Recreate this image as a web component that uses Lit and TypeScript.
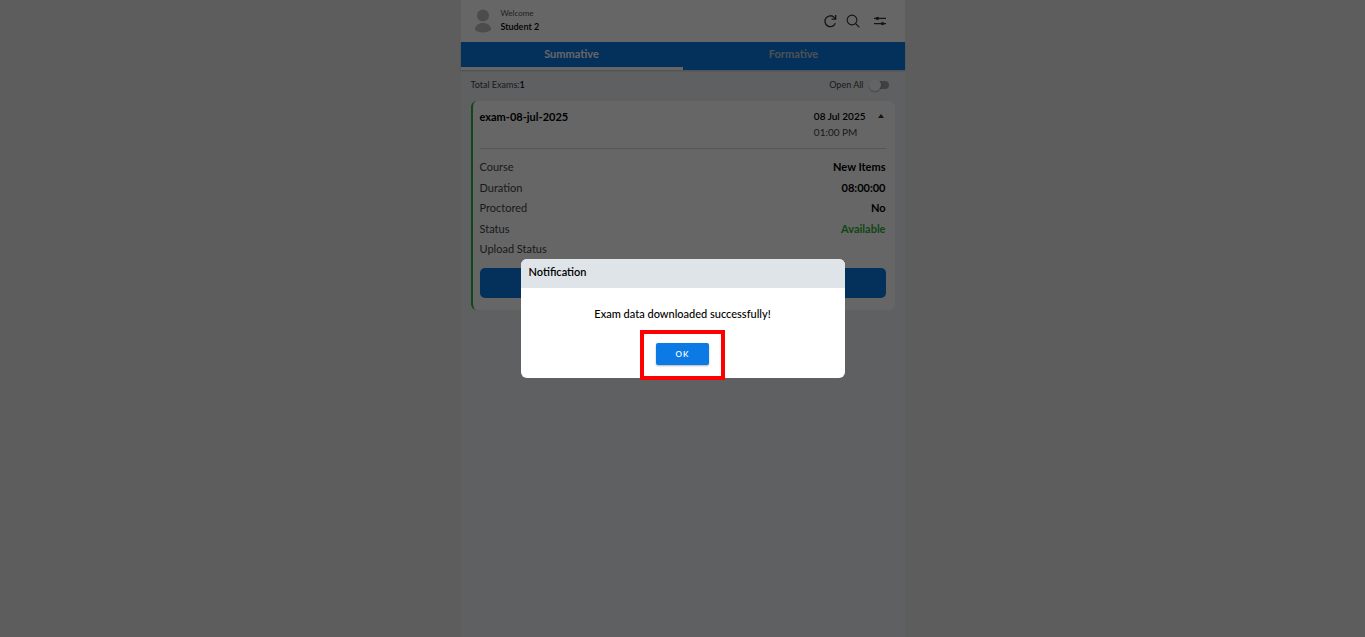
import { LitElement, html, css } from "lit";
import { customElement, state } from "lit/decorators.js";
import { classMap } from "lit/directives/class-map.js";

const details = [
  { label: "Course", value: "New Items", ok: false },
  { label: "Duration", value: "08:00:00", ok: false },
  { label: "Proctored", value: "No", ok: false },
  { label: "Status", value: "Available", ok: true },
  { label: "Upload Status", value: "", ok: false },
];

@customElement("app-root")
export class AppRoot extends LitElement {
  @state() private tab = 0;
  @state() private expanded = true;
  @state() private notice = true;

  static styles = css`
    :host {
      display: block;
      min-height: 100vh;
      background: #e9e9e9;
      color: #000;
      font-family: Lato, "Open Sans", sans-serif;
      font-size: 11px;
      line-height: 14px;
    }
    * {
      box-sizing: border-box;
    }
    button {
      margin: 0;
      padding: 0;
      border: 0;
      background: none;
      font: inherit;
      color: inherit;
      cursor: pointer;
    }
    svg {
      display: block;
    }
    .app {
      width: 100%;
      max-width: 444px;
      min-height: 100vh;
      margin: 0 auto;
      background: #edf1f5;
    }
    .header {
      display: flex;
      align-items: center;
      padding: 6px 18px 6px 13px;
      background: #fff;
    }
    .who {
      flex: 1;
      margin-left: 9px;
      padding-bottom: 2px;
      font-size: 9px;
    }
    .welcome {
      color: #555;
      font-size: 8px;
    }
    .name {
      font-weight: 600;
    }
    .tools {
      display: flex;
      gap: 9px;
      color: #333;
    }
    .tools button:last-child {
      margin-left: 4px;
    }
    .tabs {
      display: flex;
      background: #0b7ae5;
      box-shadow: 0 1px 2px rgba(0, 0, 0, 0.2);
    }
    .tab {
      flex: 1;
      padding: 5px 0 6px;
      border-bottom: 3px solid transparent;
      color: #c3cbd3;
      font-weight: 700;
    }
    .tab.active {
      color: #fff;
      border-bottom-color: #fff;
    }
    .summary {
      display: flex;
      justify-content: space-between;
      align-items: center;
      padding: 8px 16px 9px 10px;
      font-size: 9px;
      color: #444;
    }
    .summary b {
      color: #000;
      font-weight: 600;
    }
    .open {
      display: flex;
      align-items: center;
      gap: 6px;
    }
    .switch {
      appearance: none;
      display: flex;
      align-items: center;
      width: 14px;
      height: 8px;
      margin: 0 0 0 5px;
      border-radius: 4px;
      background: #a0a0a0;
    }
    .switch::before {
      content: "";
      flex: none;
      width: 12px;
      height: 12px;
      margin-left: -6px;
      border-radius: 50%;
      background: #fafafa;
      box-shadow: 0 1px 2px rgba(0, 0, 0, 0.3);
    }
    .switch:checked::before {
      margin-left: 6px;
      background: #0b7ae5;
    }
    .card {
      margin: 0 10px;
      padding: 8px 9px 12px 7px;
      border-left: 2px solid #2cae38;
      border-radius: 6px;
      background: #fff;
    }
    .top {
      display: flex;
      justify-content: space-between;
      padding-bottom: 9px;
      border-bottom: 1px solid #d4d4d4;
    }
    .title {
      margin: 0;
      font-size: 11px;
      font-weight: 700;
      line-height: 15px;
    }
    .when {
      display: flex;
      align-items: flex-start;
      gap: 10px;
      font-size: 10px;
    }
    .date {
      display: block;
      font-weight: 600;
    }
    .time {
      display: block;
      margin-top: 2px;
      color: #444;
    }
    .toggle {
      padding: 5px 2px;
    }
    .details {
      display: flex;
      flex-direction: column;
      justify-content: space-between;
      min-height: 96px;
      margin: 11px 0 12px;
    }
    .row {
      display: flex;
      justify-content: space-between;
    }
    dt {
      color: #444;
    }
    dd {
      margin: 0;
      font-weight: 700;
    }
    dd.ok {
      color: #2cae38;
    }
    .primary {
      display: block;
      width: 100%;
      height: 30px;
      border-radius: 5px;
      background: #0b7ae5;
      color: #fff;
    }
    .backdrop {
      position: fixed;
      inset: 0;
      display: flex;
      align-items: center;
      justify-content: center;
      background: rgba(0, 0, 0, 0.6);
    }
    .dialog {
      width: 324px;
      max-width: 90%;
      border-radius: 6px;
      background: #fff;
    }
    .heading {
      margin: 0;
      padding: 6px 8px 9px;
      border-radius: 6px 6px 0 0;
      background: #dfe4e8;
      font-size: 11px;
      font-weight: 600;
      line-height: 14px;
    }
    .body {
      display: flex;
      flex-direction: column;
      align-items: center;
      gap: 22px;
      padding: 19px 8px 13px;
      text-align: center;
    }
    .message {
      margin: 0;
      font-weight: 500;
    }
    .action {
      position: relative;
    }
    .action::after {
      content: "";
      position: absolute;
      inset: -13px -16px -15px;
      border: 4px solid #f00;
      pointer-events: none;
    }
    .accept {
      display: block;
      width: 53px;
      height: 22px;
      border-radius: 2px;
      background: #0b7ae5;
      box-shadow: 0 1px 2px rgba(0, 0, 0, 0.3);
      color: #fff;
      font-size: 8px;
      font-weight: 600;
      letter-spacing: 1px;
    }
  `;

  render() {
    return html`
      <main class="app">
        <header class="header">
          <svg width="18" height="24" viewBox="0 0 18 24" fill="#bdbdbd" aria-hidden="true">
            <circle cx="9" cy="6.400" r="6" />
            <path d="M1 19.500C2.500 15.500 5.500 14 9 14s6.500 1.500 8 5.500c.3 1-.2 1.700-1.200 2.300C12 24 6 24 2.200 21.800 1.200 21.200.7 20.500 1 19.500Z" />
          </svg>
          <div class="who">
            <div class="welcome">Welcome</div>
            <div class="name">Student 2</div>
          </div>
          <div class="tools">
            <button aria-label="Refresh">
              <svg width="14" height="14" viewBox="0 0 14 14" fill="none" stroke="currentColor" stroke-width="1.300">
                <path d="M12.300 9.300A5.400 5.400 0 1 1 11.200 3.400L12.600 4.800M12.700 1v4.100H8.600" />
              </svg>
            </button>
            <button aria-label="Search">
              <svg width="14" height="14" viewBox="0 0 14 14" fill="none" stroke="currentColor" stroke-width="1.100">
                <circle cx="6" cy="6" r="4.900" />
                <path d="m9.500 9.500 3.900 3.900" />
              </svg>
            </button>
            <button aria-label="Filter">
              <svg width="14" height="14" viewBox="0 0 14 14" fill="none" stroke="currentColor" stroke-width="1.200">
                <path d="M1 4.400h12M1 9.600h12" />
                <circle cx="4.500" cy="4.400" r="1.700" fill="currentColor" stroke="none" />
                <circle cx="9.500" cy="9.600" r="1.700" fill="currentColor" stroke="none" />
              </svg>
            </button>
          </div>
        </header>
        <nav class="tabs" role="tablist">
          ${["Summative", "Formative"].map(
            (name, i) => html`<button
              role="tab"
              aria-selected=${this.tab === i}
              class=${classMap({ tab: true, active: this.tab === i })}
              @click=${() => (this.tab = i)}
            >${name}</button>`
          )}
        </nav>
        <div class="summary">
          <span>Total Exams:<b>1</b></span>
          <label class="open">Open All <input class="switch" type="checkbox" role="switch" /></label>
        </div>
        <article class="card">
          <div class="top">
            <h2 class="title">exam-08-jul-2025</h2>
            <div class="when">
              <div><span class="date">08 Jul 2025</span><span class="time">01:00 PM</span></div>
              <button class="toggle" aria-label="Toggle details" @click=${() => (this.expanded = !this.expanded)}>
                <svg width="6" height="4" viewBox="0 0 6 4" fill="#333"><path d="M0 4 3 0l3 4Z" /></svg>
              </button>
            </div>
          </div>
          ${this.expanded
            ? html`<dl class="details">
                  ${details.map(
                    (d) => html`<div class="row">
                      <dt>${d.label}</dt>
                      <dd class=${classMap({ ok: d.ok })}>${d.value}</dd>
                    </div>`
                  )}
                </dl>
                <button class="primary" aria-label="Start exam"></button>`
            : ""}
        </article>
      </main>
      ${this.notice
        ? html`<div class="backdrop">
            <section class="dialog" role="dialog" aria-modal="true" aria-labelledby="heading">
              <h1 class="heading" id="heading">Notification</h1>
              <div class="body">
                <p class="message">Exam data downloaded successfully!</p>
                <div class="action">
                  <button class="accept" @click=${() => (this.notice = false)}>OK</button>
                </div>
              </div>
            </section>
          </div>`
        : ""}
    `;
  }
}
